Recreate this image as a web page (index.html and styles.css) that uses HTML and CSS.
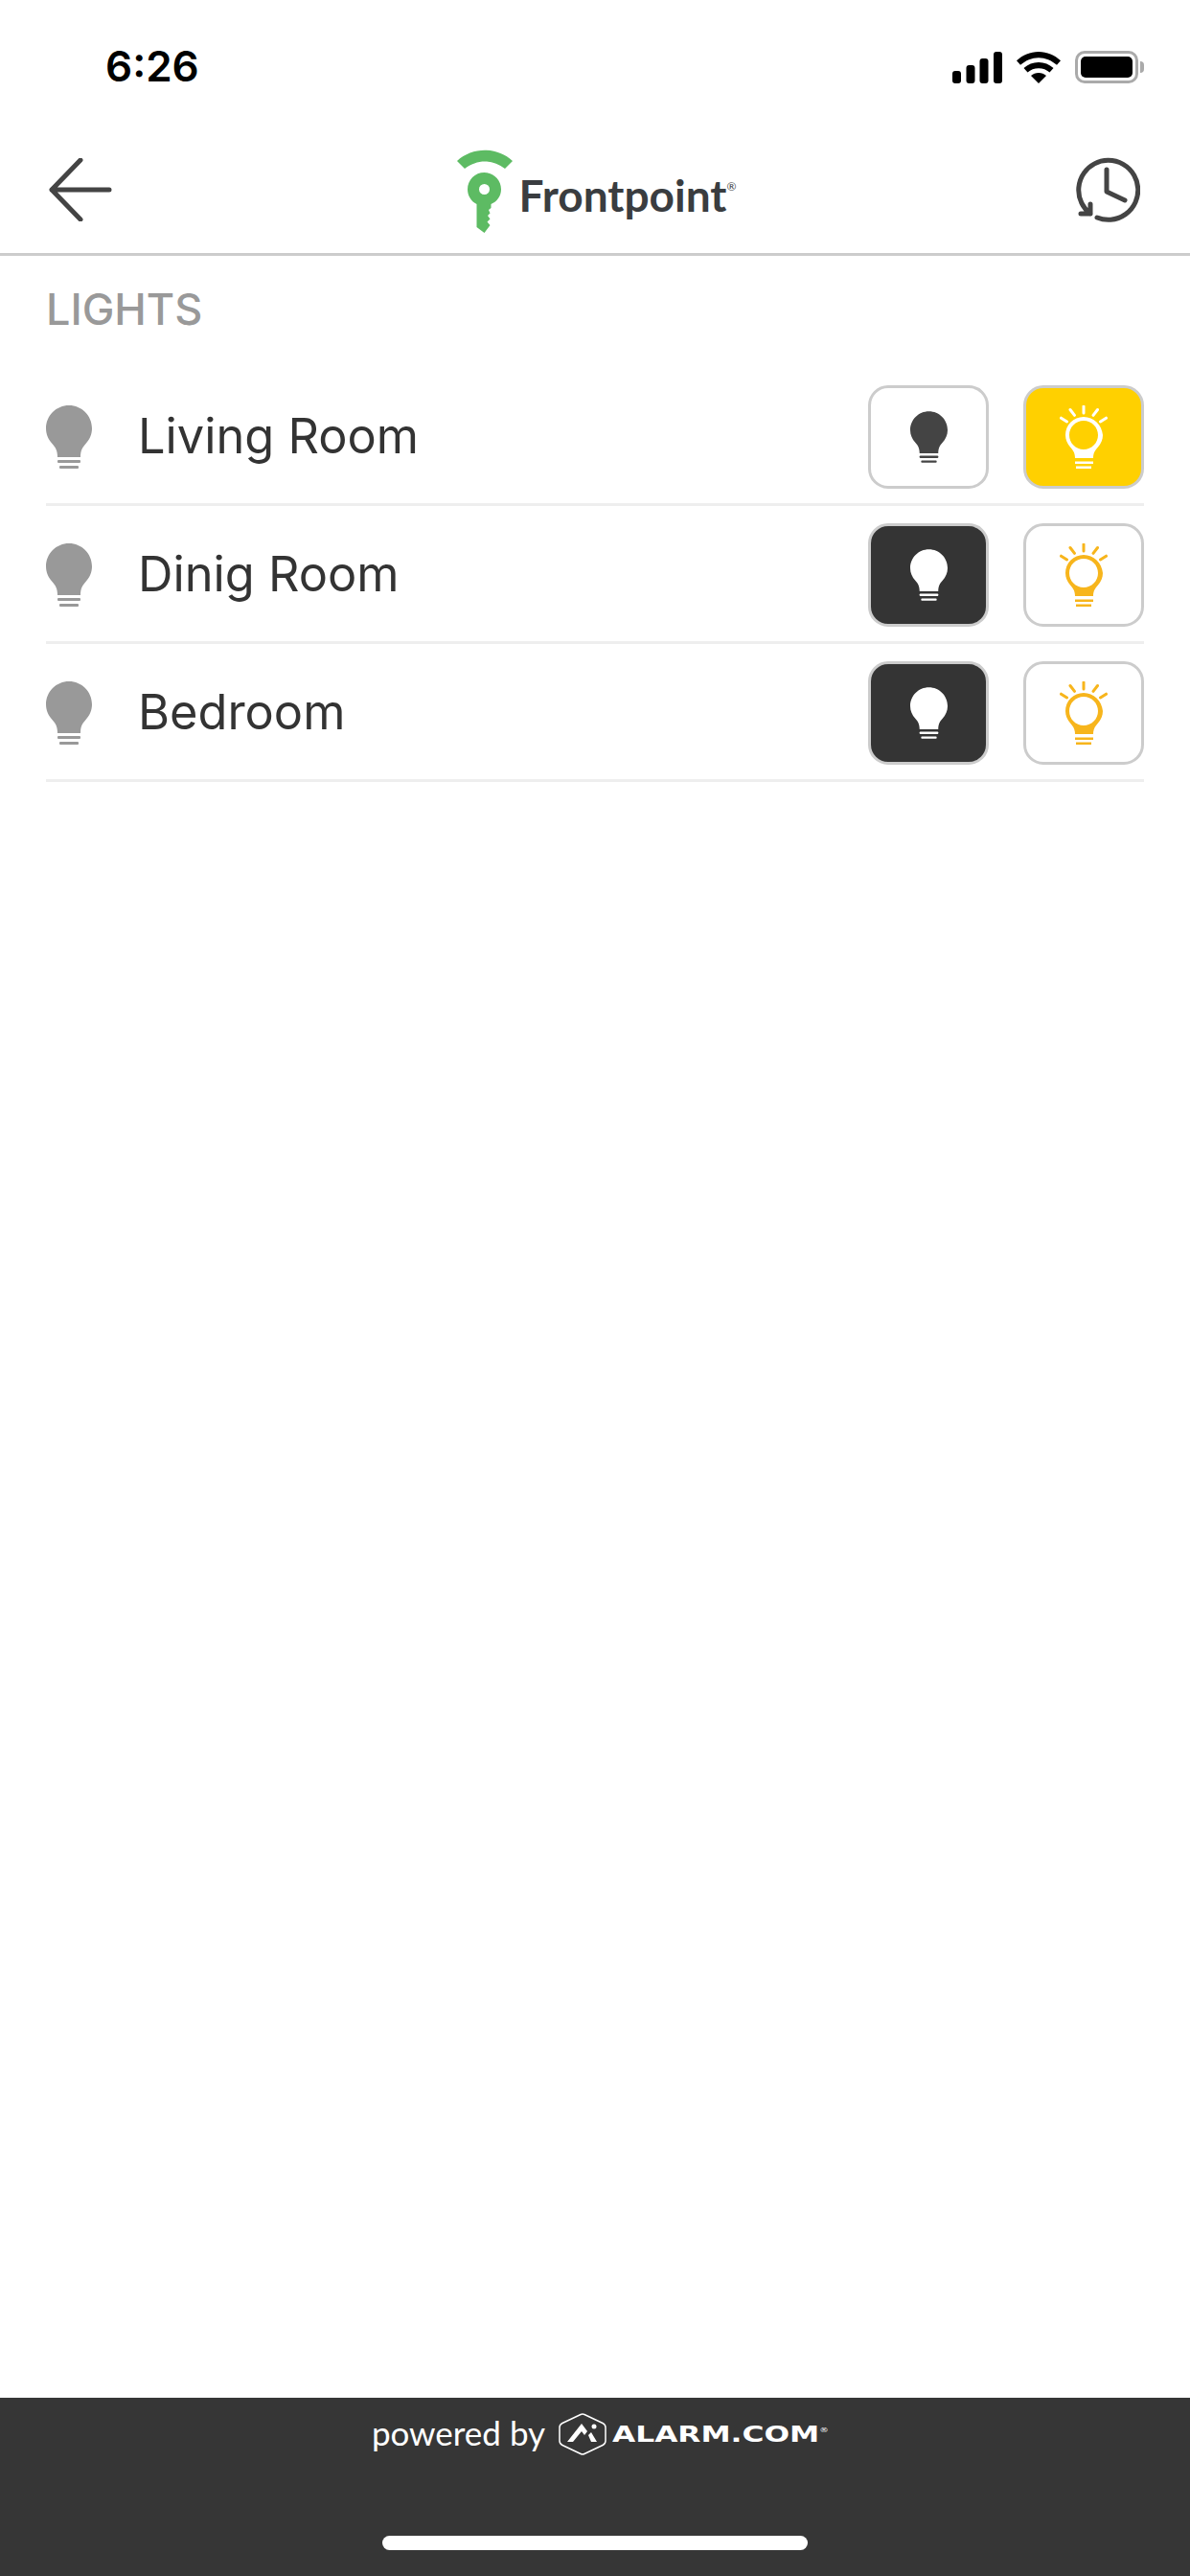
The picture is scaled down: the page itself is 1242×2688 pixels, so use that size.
FILE: index.html
```html
<!DOCTYPE html>
<html lang="en">

<head>
    <meta charset="UTF-8" />
    <meta name="viewport" content="width=device-width, initial-scale=1.0" />
    <title>Lights</title>
    <link rel="stylesheet" href="styles.css">
</head>

<body>
    <svg class="defs" width="0" height="0">
        <symbol id="bulb" viewBox="0 0 48 66">
            <path d="M24 0C10.7 0 0 10.7 0 24c0 6.500 2.500 11.500 6.500 16C10 44 12 47 12 54h24c0-7 2-10 5.500-14 4-4.500 6.500-9.500 6.500-16C48 10.700 37.300 0 24 0z" />
            <rect x="12" y="57" width="24" height="3" rx="1" />
            <rect x="14" y="63" width="20" height="3" rx="1" />
        </symbol>
        <symbol id="bulb-on" viewBox="0 0 50 66">
            <path fill-rule="evenodd" d="M25 12C14.500 12 6 20.500 6 31c0 5 2 9 5 12.500 3 3.500 5 6 5 11.500h19c0-5.500 2-8 5-11.500 3-3.500 5-7.500 5-12.500C44 20.500 35.500 12 25 12zm0 4c8.300 0 15 6.700 15 15s-6.700 15-15 15-15-6.700-15-15 6.700-15 15-15z" />
            <rect x="16" y="58.500" width="19" height="2.500" />
            <rect x="17" y="63.500" width="16" height="2.500" />
            <path class="rays" d="M25 1v7M11 4.500l4.500 5.800M39.500 4.500L35 10.300M1.500 13.200l6 3.800M48.500 13.200l-6 3.800" />
        </symbol>
    </svg>

    <div class="page">
        <header class="top">
            <div class="status">
                <span class="time">6:26</span>
                <div class="status-icons">
                    <svg class="signal" width="52" height="33" viewBox="0 0 52 33">
                        <rect x="0" y="20" width="9" height="13" rx="3" />
                        <rect x="14.500" y="14" width="9" height="19" rx="3" />
                        <rect x="28.500" y="7" width="9" height="26" rx="3" />
                        <rect x="43" y="0" width="9" height="33" rx="3" />
                    </svg>
                    <svg class="wifi" width="46" height="33" viewBox="0 0 46 33">
                        <path d="M23 0C14 0 6.500 3.500 0 9.200l4 4.600C9.500 9 16 6.200 23 6.200S36.500 9 42 13.800l4-4.600C39.500 3.500 32 0 23 0z" />
                        <path d="M23 11c-6 0-11 2.200-15.500 6l4 4.600c3.300-2.800 7-4.300 11.500-4.300s8.200 1.500 11.500 4.300l4-4.600C34 13.200 29 11 23 11z" />
                        <path d="M23 22c-3.200 0-5.700 1-8 3l8 8 8-8c-2.300-2-4.800-3-8-3z" />
                    </svg>
                    <div class="battery">
                        <div class="battery-level"></div>
                    </div>
                </div>
            </div>
            <nav class="nav">
                <svg class="back" width="66" height="66" viewBox="0 0 66 66">
                    <path d="M63 33H3M33 2L3 33l30 31" />
                </svg>
                <div class="logo">
                    <svg class="key" width="58" height="90" viewBox="0 0 58 90">
                        <path class="key-wifi" d="M0 15C16 0 42 0 58 15l-8 8C37 13 21 13 8 23z" />
                        <path fill-rule="evenodd" d="M28.500 27C18.800 27 11 34.800 11 44.500c0 7 4 12.800 9.500 15.500v24l8 6 6-8-3-3.500 3-3-2.500-3.500 2.500-2.500-1.500-3.500 2.500-2V60C42 57.300 46 51.500 46 44.500 46 34.800 38.200 27 28.500 27zm0 12a5.500 5.500 0 1 1 0 11 5.500 5.500 0 0 1 0-11z" />
                    </svg>
                    <span class="logo-name">Frontpoint<sup>®</sup></span>
                </div>
                <svg class="history" width="68" height="68" viewBox="0 0 68 68">
                    <path d="M16 59A31 31 0 1 1 23 63M33 13v23l19 9M6 59h10V49" />
                </svg>
            </nav>
        </header>

        <main class="content">
            <div class="section-title">LIGHTS</div>

            <div class="row">
                <svg class="row-icon"><use href="#bulb" /></svg>
                <div class="row-name">Living Room</div>
                <button class="btn off"><svg class="icon-off"><use href="#bulb" /></svg></button>
                <button class="btn on active"><svg class="icon-on"><use href="#bulb-on" /></svg></button>
            </div>

            <div class="row">
                <svg class="row-icon"><use href="#bulb" /></svg>
                <div class="row-name">Dinig Room</div>
                <button class="btn off active"><svg class="icon-off"><use href="#bulb" /></svg></button>
                <button class="btn on"><svg class="icon-on"><use href="#bulb-on" /></svg></button>
            </div>

            <div class="row">
                <svg class="row-icon"><use href="#bulb" /></svg>
                <div class="row-name">Bedroom</div>
                <button class="btn off active"><svg class="icon-off"><use href="#bulb" /></svg></button>
                <button class="btn on"><svg class="icon-on"><use href="#bulb-on" /></svg></button>
            </div>
        </main>

        <footer class="footer">
            <div class="powered">
                <span class="powered-by">powered by</span>
                <svg class="adc-mark" width="50" height="44" viewBox="0 0 50 44">
                    <path class="adc-hex" d="M23 1.500L4 10.500c-2 1-3 2.500-3 4.500v14c0 2 1 3.500 3 4.500l19 9c1.500.7 2.500.7 4 0l19-9c2-1 3-2.500 3-4.500V15c0-2-1-3.500-3-4.500l-19-9c-1.500-.7-2.500-.7-4 0z" />
                    <path d="M9 30L24 11l6 8-3 4-3-4-9 11zM31 23l3-3 6 10h-6z" />
                    <circle cx="37" cy="14" r="2.500" />
                </svg>
                <span class="adc-name">ALARM.COM<sup>®</sup></span>
            </div>
            <div class="home-bar"></div>
        </footer>
    </div>
</body>

</html>
```

FILE: styles.css
```css
html,
body {
    margin: 0;
    padding: 0;
    font-family: "Inter", "Liberation Sans", sans-serif;
    background-color: #fff;
    color: #333;
}

.defs {
    position: absolute;
}

.page {
    display: flex;
    flex-direction: column;
    min-height: 2688px;
}

.top {
    border-bottom: 3px solid #ccc;
}

.status {
    height: 124px;
    padding: 8px 54px 0 110px;
    display: flex;
    justify-content: space-between;
    align-items: center;
}

.time {
    font-size: 44px;
    font-weight: 600;
    color: #000;
    line-height: 50px;
    margin-top: -2px;
}

.status-icons {
    display: flex;
    align-items: center;
    gap: 15px;
}

.signal,
.wifi {
    fill: #000;
}

.battery {
    position: relative;
    box-sizing: border-box;
    width: 66px;
    height: 34px;
    border: 3px solid #aaa;
    border-radius: 10px;
    padding: 3px;
}

.battery::after {
    content: "";
    position: absolute;
    right: -9px;
    top: 8px;
    width: 4px;
    height: 12px;
    background-color: #aaa;
    border-radius: 0 6px 6px 0;
}

.battery-level {
    height: 100%;
    background-color: #000;
    border-radius: 5px;
}

.nav {
    height: 132px;
    padding: 0 52px 0 51px;
    display: flex;
    justify-content: space-between;
    align-items: center;
}

.back {
    fill: none;
    stroke: #444;
    stroke-width: 5;
    stroke-linecap: round;
    stroke-linejoin: round;
}

.logo {
    display: flex;
    align-items: center;
    gap: 7px;
    margin-left: 6px;
}

.key {
    fill: #5dbb63;
}

.logo-name {
    font-family: "Lato", sans-serif;
    font-size: 46px;
    font-weight: 700;
    color: #3a3d40;
    margin-top: 10px;
}

.logo-name sup {
    font-size: 12px;
    font-weight: 400;
    vertical-align: 22px;
    line-height: 0;
}

.history {
    fill: none;
    stroke: #444;
    stroke-width: 5;
    stroke-linecap: round;
    stroke-linejoin: round;
}

.content {
    flex: 1;
    padding: 0 48px;
}

.section-title {
    font-size: 45px;
    font-weight: 500;
    line-height: 48px;
    color: #999;
    padding: 32px 0 37px 0;
}

.row {
    display: flex;
    align-items: center;
    gap: 36px;
    padding: 18px 0 15px;
    border-bottom: 3px solid #eee;
}

.row-icon {
    width: 48px;
    height: 66px;
    fill: #999;
}

.row-name {
    flex: 1;
    font-size: 50.500px;
    line-height: 60px;
    margin: -2px 0 0 12px;
}

.btn {
    box-sizing: border-box;
    width: 126px;
    height: 108px;
    padding: 0;
    border: 3px solid #ccc;
    border-radius: 21px;
    background-color: #fff;
    display: flex;
    justify-content: center;
    align-items: center;
}

.icon-off {
    width: 39px;
    height: 54px;
    fill: #444;
}

.icon-on {
    width: 50px;
    height: 66px;
    fill: #f7b51c;
    color: #f7b51c;
}

.off.active {
    background-color: #343434;
}

.off.active .icon-off {
    fill: #fff;
}

.on.active {
    background-color: #ffd000;
}

.on.active .icon-on {
    fill: #fff;
    color: #fff;
}

.rays {
    fill: none;
    stroke: currentColor;
    stroke-width: 3;
    stroke-linecap: round;
}

.footer {
    background-color: #363636;
    height: 186px;
    box-sizing: border-box;
    padding-top: 14px;
    display: flex;
    flex-direction: column;
    align-items: center;
}

.powered {
    height: 48px;
    display: flex;
    align-items: center;
    color: #fff;
}

.powered-by {
    font-family: "Lato", sans-serif;
    font-size: 35px;
    font-weight: 400;
    margin-right: 14px;
    margin-top: -5px;
}

.adc-mark {
    fill: #fff;
    margin-right: 6px;
}

.adc-hex {
    fill: none;
    stroke: #fff;
    stroke-width: 1.500;
}

.adc-name {
    font-family: "DejaVu Sans", sans-serif;
    font-size: 23px;
    font-weight: 700;
    width: 215px;
    transform: scaleX(1.36);
    transform-origin: left center;
    white-space: nowrap;
}

.adc-name sup {
    font-size: 7px;
    font-weight: 400;
    line-height: 0;
    vertical-align: 10px;
}

.home-bar {
    width: 444px;
    height: 15px;
    margin-top: 82px;
    background-color: #fff;
    border-radius: 8px;
}
```
